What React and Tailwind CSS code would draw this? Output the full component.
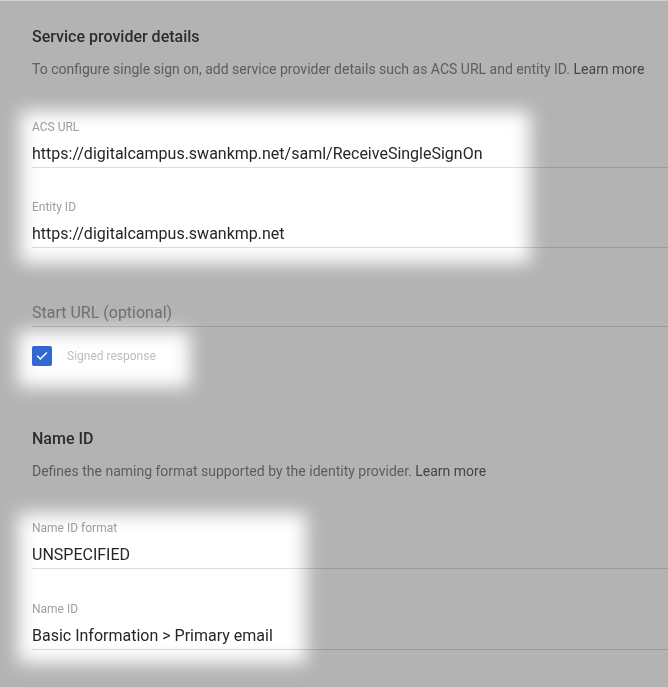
import React from "react";

function Field({ label, value, placeholder, className = "" }) {
  return (
    <div className={className}>
      <div className="h-4 text-xs leading-4 text-[#9e9e9e]">{label}</div>
      <div className="mt-[7px] border-b border-[#dadce0] pb-[1px]">
        {value ? (
          <div className="text-base leading-6 text-[#262626]">{value}</div>
        ) : (
          <div className="text-base leading-6 text-[#9aa0a6]">{placeholder}</div>
        )}
      </div>
    </div>
  );
}

export default function App() {
  return (
    <div
      className="relative h-[688px] w-[668px] overflow-hidden border-y border-[#cfcfcf] bg-white"
      style={{ fontFamily: "Roboto, 'Liberation Sans', sans-serif" }}
    >
      <div className="pl-8 pt-[24px]">
        <h2 className="text-base font-medium leading-6 text-[#3c4043]">Service provider details</h2>
        <p className="mt-[10px] text-sm leading-5 text-[#80868b]">
          To configure single sign on, add service provider details such as ACS URL and entity ID.{" "}
          <span className="text-[#5f6368]">Learn more</span>
        </p>

        <Field className="mt-10" label="ACS URL" value="https://digitalcampus.swankmp.net/saml/ReceiveSingleSignOn" />
        <Field className="mt-[31px]" label="Entity ID" value="https://digitalcampus.swankmp.net" />
        <Field className="mt-[30px]" label="" placeholder="Start URL (optional)" />

        <div className="mt-[19px] flex items-center gap-[15px]">
          <div className="flex h-5 w-5 items-center justify-center rounded-[2px] bg-[#3367d6]">
            <svg viewBox="0 0 24 24" className="h-4 w-4" fill="none" stroke="white" strokeWidth="2.2" strokeLinecap="square">
              <path d="M5.5 12.5l4 4L18.5 7.5" />
            </svg>
          </div>
          <span className="text-xs leading-4 text-[#bdbdbd]">Signed response</span>
        </div>

        <h2 className="mt-[61px] text-base font-medium leading-6 text-[#3c4043]">Name ID</h2>
        <p className="mt-[10px] text-sm leading-5 text-[#80868b]">
          Defines the naming format supported by the identity provider.{" "}
          <span className="text-[#5f6368]">Learn more</span>
        </p>

        <Field className="mt-[39px]" label="Name ID format" value="UNSPECIFIED" />
        <Field className="mt-8" label="Name ID" value="Basic Information > Primary email" />
      </div>

      {/* dimming overlay with highlighted holes */}
      <div className="pointer-events-none absolute inset-0 bg-[#b3b3b3] mix-blend-multiply">
        <div className="absolute left-[20px] top-[110px] h-[152px] w-[510px] bg-white blur-[9px]" />
        <div className="absolute left-[18px] top-[330px] h-[56px] w-[172px] bg-white blur-[9px]" />
        <div className="absolute left-[18px] top-[512px] h-[150px] w-[288px] bg-white blur-[9px]" />
      </div>
    </div>
  );
}
